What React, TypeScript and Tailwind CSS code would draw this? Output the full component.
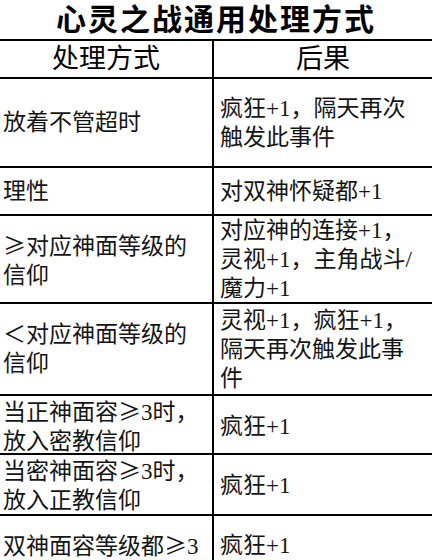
import React from "react";

type Row = {
  left: React.ReactNode;
  right: React.ReactNode;
  h: string;
};

// full-width ≥ like the reference (SimSun style)
const Ge = () => <span className="inline-block w-[1em] text-center font-['Noto_Sans_CJK_SC',sans-serif]">≥</span>;

const rows: Row[] = [
  {
    left: "放着不管超时",
    right: (
      <>
        疯狂+1，隔天再次
        <br />
        触发此事件
      </>
    ),
    h: "h-[89px]",
  },
  { left: "理性", right: "对双神怀疑都+1", h: "h-[48px]" },
  {
    left: (
      <>
        <Ge />对应神面等级的
        <br />
        信仰
      </>
    ),
    right: (
      <>
        对应神的连接+1，
        <br />
        灵视+1，主角战斗/
        <br />
        魔力+1
      </>
    ),
    h: "h-[88px]",
  },
  {
    left: (
      <>
        ＜对应神面等级的
        <br />
        信仰
      </>
    ),
    right: (
      <>
        灵视+1，疯狂+1，
        <br />
        隔天再次触发此事
        <br />件
      </>
    ),
    h: "h-[92px]",
  },
  {
    left: (
      <>
        当正神面容<Ge />3时，
        <br />
        放入密教信仰
      </>
    ),
    right: "疯狂+1",
    h: "h-[59px]",
  },
  {
    left: (
      <>
        当密神面容<Ge />3时，
        <br />
        放入正教信仰
      </>
    ),
    right: "疯狂+1",
    h: "h-[61px]",
  },
  {
    left: (
      <>
        双神面容等级都<Ge />3
      </>
    ),
    right: "疯狂+1",
    h: "h-[60px]",
  },
];

const body = "font-['Liberation_Serif','Noto_Sans_CJK_SC',serif] text-[23px] leading-[29px] text-[#141414]";

export default function App() {
  return (
    <div className="w-[432px] bg-white">
      <h1 className="h-[39px] pt-[3px] text-center font-['Liberation_Sans','Noto_Sans_CJK_SC',sans-serif] font-bold text-[30px] leading-[34px] tracking-[2px] text-black">
        心灵之战通用处理方式
      </h1>
      <div className="border-t-2 border-black">
        <div className="grid grid-cols-[212px_1fr] h-[38px] border-b-2 border-black font-['Liberation_Sans','Noto_Sans_CJK_SC',sans-serif] text-[27px] font-normal text-black">
          <div className="flex items-center justify-center leading-none">处理方式</div>
          <div className="flex items-center justify-center border-l-2 border-black leading-none">后果</div>
        </div>
        {rows.map((r, i) => (
          <div
            key={i}
            className={`grid grid-cols-[212px_1fr] border-b-2 border-black ${r.h} ${body}`}
          >
            <div className="flex items-center pl-[3px] whitespace-nowrap">
              <div>{r.left}</div>
            </div>
            <div className="flex items-center border-l-2 border-black pl-[6px] whitespace-nowrap">
              <div>{r.right}</div>
            </div>
          </div>
        ))}
      </div>
    </div>
  );
}
